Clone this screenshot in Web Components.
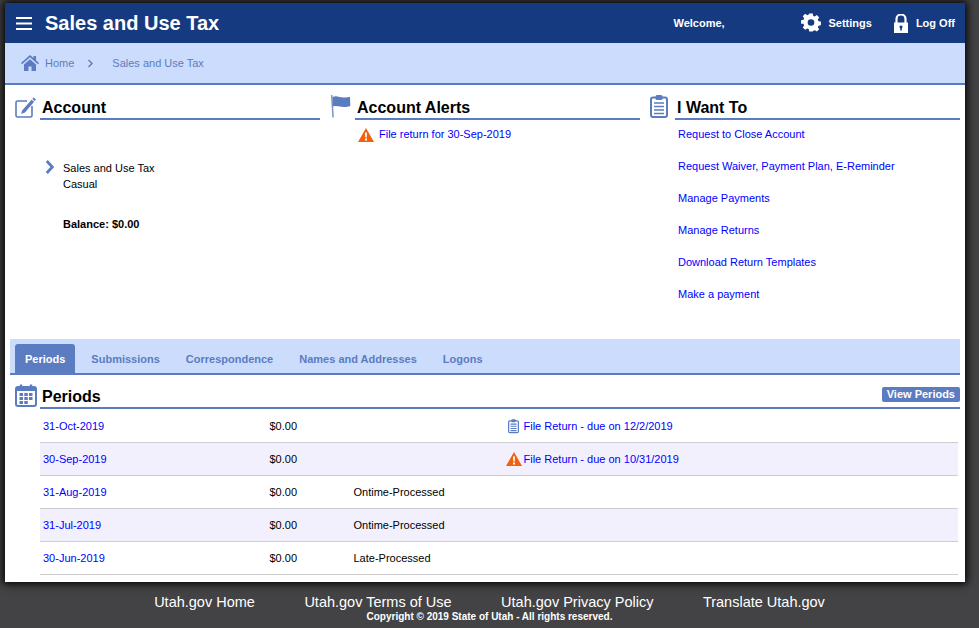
<!DOCTYPE html>
<html lang="en"><head><meta charset="utf-8"><title>Sales and Use Tax</title>
<style>
html,body{margin:0;padding:0;height:628px;overflow:hidden}
body{background:#434345;font-family:"Liberation Sans",Arial,sans-serif;font-size:11px;color:#000}
</style></head><body>
<tax-app></tax-app>
<script>
const ICONS={
menu:'<svg width="16" height="13" viewBox="0 0 16 13"><path d="M0 1h16M0 6.500h16M0 12h16" stroke="#fff" stroke-width="2"/></svg>',
gear:'<svg width="20" height="20" viewBox="0 0 20 20"><path fill="#fff" fill-rule="evenodd" d="M8 0h4l.5 2.700 1.700.7 2.300-1.600 2.600 2.700-1.500 2.200.7 1.800 2.700.5v4l-2.700.5-.7 1.700 1.500 2.300-2.600 2.600-2.300-1.500-1.700.7L12 20H8l-.5-2.700-1.700-.7-2.300 1.500-2.700-2.600 1.600-2.300-.7-1.700L-1 11.500v-4l2.700-.5.7-1.800L.8 3l2.700-2.700 2.300 1.600 1.700-.7zM10 6.300a3.700 3.700 0 100 7.400 3.700 3.700 0 000-7.400z" transform="translate(1 .5) scale(.9)"/></svg>',
lock:'<svg width="16" height="19" viewBox="0 0 16 19"><path d="M3.500 9V5a4.500 4.500 0 019 0v4" fill="none" stroke="#fff" stroke-width="2.200"/><path fill="#fff" fill-rule="evenodd" d="M1 8.500h14V19H1zM8 11.500a1.500 1.500 0 00-.8 2.800V16.500h1.600v-2.200A1.500 1.500 0 008 11.500z"/></svg>',
home:'<svg width="18" height="16" viewBox="0 0 18 16"><path fill="#5b7cc0" fill-rule="evenodd" d="M9 0l3.500 3V1h2.500v4.200L18 8l-1 1.200L9 2.300 1 9.200 0 8zM3 9.500L9 4.300l6 5.200V16h-4.500v-4.500h-3V16H3z"/></svg>',
chev:'<svg width="7" height="9" viewBox="0 0 7 9"><path d="M1.500 1l3.500 3.500L1.500 8" fill="none" stroke="#5b7cc0" stroke-width="1.400"/></svg>',
edit:'<svg width="22" height="22" viewBox="0 0 22 22"><path d="M12 5H2.500A1.500 1.500 0 001 6.500v13A1.500 1.500 0 002.500 21h13a1.500 1.500 0 001.500-1.500V10" fill="none" stroke="#5b7cc0" stroke-width="1.600"/><path fill="#5b7cc0" d="M18.500 1.500l2.500 2-1.200 1.600-2.500-2zM16.600 3.800l2.500 2L10 16.500l-3.800 1.500.9-3.600z"/></svg>',
flag:'<svg width="21" height="23" viewBox="0 0 21 23"><path d="M1.700 0l1.400 22.500" stroke="#7c94c9" stroke-width="1.500" fill="none"/><path fill="#5b7cc0" d="M2.500 2c4-2 7 .5 11 .5 3 0 5-.5 6.500-.5l.3 9c-2 .7-4 1-6.500 1-4 0-7-1.800-10.700-.5z"/></svg>',
clip:'<svg width="18" height="24" viewBox="0 0 18 24"><rect x="1" y="3.500" width="16" height="19.500" rx="2" fill="#fff" stroke="#5b7cc0" stroke-width="2"/><rect x="5.500" y="1" width="7" height="5" rx="1.500" fill="#5b7cc0"/><path d="M4 9h10M4 12.500h10M4 16h10M4 19.500h10" stroke="#5b7cc0" stroke-width="1.600"/></svg>',
clipS:'<svg width="11" height="16" viewBox="0 0 18 24"><rect x="1" y="3.500" width="16" height="19.500" rx="2" fill="#fff" stroke="#5b7cc0" stroke-width="2"/><rect x="5.500" y="1" width="7" height="5" rx="1.500" fill="#5b7cc0"/><path d="M4 9h10M4 12.500h10M4 16h10M4 19.500h10" stroke="#5b7cc0" stroke-width="1.800"/></svg>',
warn:'<svg width="16" height="14" viewBox="0 0 16 14"><path fill="#f2610c" d="M8 0l8 14H0z"/><path fill="#fff" d="M7 4.500h2l-.3 5H7.300zM7 10.500h2v2H7z"/></svg>',
cal:'<svg width="22" height="23" viewBox="0 0 22 23"><rect x="1" y="3" width="20" height="19" rx="2" fill="#fff" stroke="#5b7cc0" stroke-width="2"/><path fill="#5b7cc0" d="M1 3h20v4H1z"/><path d="M6 .5v4M16 .5v4" stroke="#5b7cc0" stroke-width="2.400"/><path fill="#5b7cc0" d="M4.500 9h3.500v3H4.500zM9.300 9h3.500v3H9.300zM14 9h3.500v3H14zM4.500 13h3.500v3H4.500zM9.300 13h3.500v3H9.300zM14 13h3.500v3H14zM4.500 17h3.500v3H4.500zM9.300 17h3.500v3H9.300z"/></svg>',
chevB:'<svg width="10" height="14" viewBox="0 0 10 14"><path d="M1.800 1l5.500 6-5.500 6" fill="none" stroke="#5b7cc0" stroke-width="2.800"/></svg>'
};
function def(name,css,html){
  customElements.define(name,class extends HTMLElement{
    constructor(){super();this.attachShadow({mode:'open'});}
    connectedCallback(){this.shadowRoot.innerHTML='<style>'+css+'</style>'+(typeof html==='function'?html(this):html);}
  });
}

def('top-bar',`:host{display:flex;align-items:center;height:40px;background:#163a80;color:#fff;padding-left:11px}
.t{font-size:20px;font-weight:bold;margin-left:13px}
.sp{flex:1}.w{font-weight:bold;font-size:11px;width:128px}
.l{display:flex;align-items:center;font-size:11px;font-weight:bold}
.l svg{display:block}.s{margin-right:21px}.s span{margin-left:7px}.o span{margin-left:7px}.o{margin-right:10px}`,
`<span style="display:flex">${ICONS.menu}</span><span class="t">Sales and Use Tax</span><span class="sp"></span>
<span class="w">Welcome,</span><span class="l s">${ICONS.gear}<span>Settings</span></span><span class="l o">${ICONS.lock}<span>Log Off</span></span>`);

def('bread-crumb',`:host{display:flex;align-items:center;height:40px;border-bottom:2px solid #5b7cc0;background:#cbdcfd;color:#5b7cc0;padding-left:16px;font-size:11px}
svg{display:block}.h{margin-left:6px}.c{margin:0 18px 0 13px;display:flex}`,
`${ICONS.home}<span class="h">Home</span><span class="c">${ICONS.chev}</span><span>Sales and Use Tax</span>`);

def('sec-head',`:host{display:flex;align-items:flex-end;height:24px}
.i{width:25px;flex:none;display:flex;align-items:flex-end;height:24px}
.i svg,::slotted(svg){display:block}
h2{flex:1;margin:0;font-size:16px;font-weight:bold;line-height:20px;padding-left:2px;border-bottom:2px solid #5b7cc0;color:#000}`,
`<span class="i"><slot name="icon"></slot></span><h2><slot></slot></h2>`);

def('tab-bar',`:host{display:flex;align-items:flex-end;height:34px;margin:0 5px;padding-left:5px;background:#cbdcfd;border-bottom:2px solid #5b7cc0}
span{display:flex;align-items:center;height:29px;padding:0 10px;margin-right:6px;font-weight:bold;color:#5b7cc0;font-size:11px}
.on{background:#5b7cc0;color:#fff;border-radius:3px 3px 0 0}`,
`<span class="on">Periods</span><span>Submissions</span><span>Correspondence</span><span>Names and Addresses</span><span>Logons</span>`);

def('period-row',`:host{display:grid;grid-template-columns:226.500px 84px 150px 1fr;align-items:center;height:32px;border-bottom:1px solid #ccc;padding-left:3px;background:var(--bg,#fff)}
a{color:#0000ff;text-decoration:none}
.f{display:flex;align-items:center}.ic{width:20px;display:flex;justify-content:center}
svg{display:block}`,
(h)=>`<a href="#">${h.getAttribute('date')}</a><span>$0.00</span><span>${h.getAttribute('status')||''}</span>
<span class="f"><span class="ic">${ICONS[h.getAttribute('icon')]||''}</span><a href="#">${h.getAttribute('action')||''}</a></span>`);

def('site-foot',`:host{display:block;color:#fff;text-align:center;height:46px}
.n{display:flex;justify-content:center;gap:49.500px;font-size:14.500px;padding-top:12px;line-height:16px}
.c{font-size:10px;font-weight:bold;line-height:12px;margin-top:1px}`,
`<div class="n"><span>Utah.gov Home</span><span>Utah.gov Terms of Use</span><span>Utah.gov Privacy Policy</span><span>Translate Utah.gov</span></div>
<div class="c">Copyright © 2019 State of Utah - All rights reserved.</div>`);

def('tax-app',`:host{display:block;font-family:"Liberation Sans",Arial,sans-serif;font-size:11px;padding-top:3px}
.page{margin-left:5px;width:960px;height:579px;background:#fff;box-shadow:0 0 8px 2px #000;overflow:hidden}
.cols{display:grid;grid-template-columns:315px 320px 320px;padding-top:11px;height:243px}
.col{padding-left:10px}
.list{padding:8px 0 0 28px;display:flex;flex-direction:column;gap:19px;line-height:13px}
a{color:#0000ff;text-decoration:none}
.alert{display:flex;align-items:center;gap:5px;padding:8px 0 0 28px;line-height:13px;height:13px}
.alert svg{display:block}
.acct{position:relative;padding:40px 0 0 48px;line-height:16px}
.acct svg{position:absolute;left:30px;top:40px;display:block}
.bal{font-weight:bold;margin-top:24px}
.sec{margin:10px 5px 0 10px;position:relative}
.btn{position:absolute;right:0;top:2px;background:#5b7cc0;color:#fff;font-weight:bold;border-radius:2px;height:15px;line-height:15px;padding:0 5px}
.rows{margin:1px 7px 0 35px}`,
`<div class="page"><top-bar></top-bar><bread-crumb></bread-crumb>
 <div class="cols">
  <div class="col"><sec-head><span slot="icon">${ICONS.edit}</span>Account</sec-head>
    <div class="acct">${ICONS.chevB}<div>Sales and Use Tax</div><div>Casual</div><div class="bal">Balance: $0.00</div></div></div>
  <div class="col"><sec-head><span slot="icon">${ICONS.flag}</span>Account Alerts</sec-head>
    <div class="alert">${ICONS.warn}<a href="#">File return for 30-Sep-2019</a></div></div>
  <div class="col"><sec-head><span slot="icon">${ICONS.clip}</span>I Want To</sec-head>
    <div class="list"><a href="#">Request to Close Account</a><a href="#">Request Waiver, Payment Plan, E-Reminder</a><a href="#">Manage Payments</a><a href="#">Manage Returns</a><a href="#">Download Return Templates</a><a href="#">Make a payment</a></div></div>
 </div>
 <tab-bar></tab-bar>
 <div class="sec"><sec-head><span slot="icon">${ICONS.cal}</span>Periods</sec-head><span class="btn">View Periods</span></div>
 <div class="rows">
  <period-row date="31-Oct-2019" icon="clipS" action="File Return - due on 12/2/2019"></period-row>
  <period-row date="30-Sep-2019" icon="warn" action="File Return - due on 10/31/2019" style="--bg:#f2f0fd"></period-row>
  <period-row date="31-Aug-2019" status="Ontime-Processed"></period-row>
  <period-row date="31-Jul-2019" status="Ontime-Processed" style="--bg:#f2f0fd"></period-row>
  <period-row date="30-Jun-2019" status="Late-Processed"></period-row>
 </div></div><site-foot></site-foot>`);
</script>
</body></html>
